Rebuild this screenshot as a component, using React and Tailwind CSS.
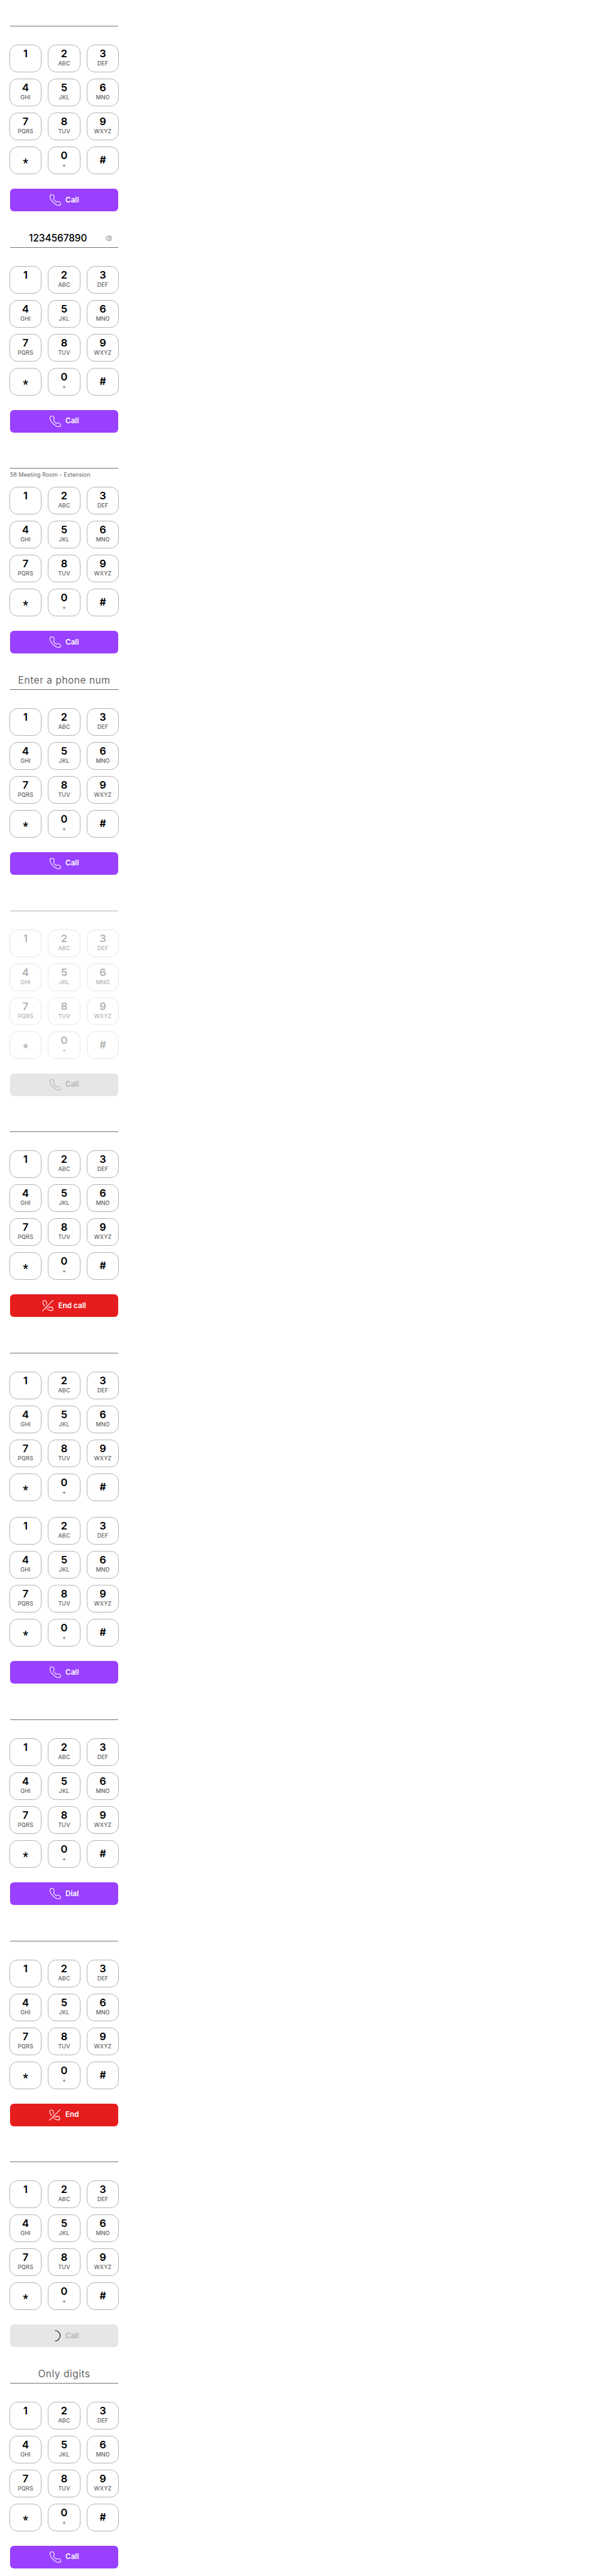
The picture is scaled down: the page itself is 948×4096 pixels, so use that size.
const KEYS = [
  ["1", ""], ["2", "ABC"], ["3", "DEF"],
  ["4", "GHI"], ["5", "JKL"], ["6", "MNO"],
  ["7", "PQRS"], ["8", "TUV"], ["9", "WXYZ"],
  ["*", null], ["0", "+"], ["#", null],
];

function PhoneIcon() {
  return (
    <svg viewBox="0 0 24 24" className="h-[18px] w-[18px]" fill="none" stroke="currentColor" strokeWidth="1.4" strokeLinejoin="round">
      <path d="M4.6.7C2.5.7.7 2.4.7 4.6C.7 8 3.3 13 7.2 16.8C11 20.7 16.2 23.3 19.5 23.3C21.7 23.3 23.3 21.8 23.3 19.7C23.3 17 20.5 15.3 18 15.3C16.2 15.3 15.1 15.7 14.4 16.3C12 15.2 9.3 12.7 8 9.8C9.3 8.9 9.8 7.7 9.7 6.2C9.5 3 7.5.7 4.6.7Z" />
    </svg>
  );
}

function EndCallIcon() {
  return (
    <svg viewBox="0 0 24 24" className="h-[18px] w-[18px]" fill="none" stroke="currentColor" strokeWidth="1.4" strokeLinecap="round">
      <path d="M23.3.7L.7 23.3" />
      <path d="M5.2 13.2C3 10.3 1.4 7.3 1.4 4.7C1.4 2.5 3 1.2 5 1.2C8 1.2 9.7 4 9.7 6.6C9.7 8 9.3 9 8.4 9.8" />
      <path d="M8.5 17.3C11.7 20.3 15.7 22.5 18.8 22.5C21.3 22.5 22.8 21.2 22.8 19.2C22.8 16.5 20.5 14.8 17.5 14.8C16 14.8 14.8 15.5 14.2 16.3C13 15.7 12 14.9 11.2 14" />
    </svg>
  );
}

function Spinner() {
  return (
    <svg viewBox="0 0 24 24" className="h-[18px] w-[18px] text-black" fill="none" stroke="currentColor" strokeWidth="1.4">
      <path d="M11.3 1A11 11 0 0 1 11.3 23" />
    </svg>
  );
}

function Backspace() {
  return (
    <svg viewBox="0 0 12 10" className="mb-[6px] h-[7.5px] w-[9px]" fill="none" stroke="#333" strokeWidth="0.9">
      <path d="M3.8.6H11.5V9.4H3.8L.6 5Z" />
      <path d="M5.7 3.2L9.3 6.8M9.3 3.2L5.7 6.8" />
    </svg>
  );
}

function Field({ value, placeholder, helper, disabled }) {
  return (
    <div className="h-[60px]">
      <div className={`flex h-[30px] items-end border-b-[0.75px] pb-[4px] ${disabled ? "border-[#b3b3b3]" : "border-[#757575]"}`}>
        {value && (
          <>
            <span className="w-[152px] pl-[1px] text-center text-[15.5px] leading-[20px] font-medium tracking-[-0.1px] text-black">{value}</span>
            <Backspace />
          </>
        )}
        {placeholder && (
          <span className="w-full text-center text-[15.5px] leading-[20px] tracking-[0.5px] whitespace-nowrap text-[#666]">{placeholder}</span>
        )}
      </div>
      {helper && <p className="mt-[4px] text-[9px] leading-[12px] tracking-[0.08px] whitespace-nowrap text-[#666]">{helper}</p>}
    </div>
  );
}

function Key({ main, sub, disabled }) {
  const color = disabled ? "text-[#b3b3b3] outline-[#e6e6e6]" : "text-black outline-[#b3b3b3]";
  const symbol = main === "*" ? "pt-[15px] font-['Roboto',sans-serif] text-[18px]" : "pt-[11px] text-[15.5px]";
  return (
    <div className={`flex h-[42px] flex-col items-center rounded-[12px] outline-[0.75px] ${color}`}>
      {sub === null ? (
        <span className={`leading-[20px] font-bold ${symbol}`}>{main}</span>
      ) : (
        <>
          <span className="pt-[3px] text-[16.5px] leading-[20px] font-semibold">{main}</span>
          <span className={`text-[9px] leading-[12px] font-medium tracking-[0.1px] ${disabled ? "" : "text-[#666]"}`}>{sub}</span>
        </>
      )}
    </div>
  );
}

const TONES = {
  call: "bg-[#9941ff] text-white",
  end: "bg-[#e61d1d] text-white",
  off: "bg-[#e6e6e6] text-[#b3b3b3]",
};

function DialPad({ field = true, button = "Call", tone = "call", icon = "phone", disabled, ...input }) {
  return (
    <section className="w-[172.5px]">
      {field && <Field disabled={disabled} {...input} />}
      <div className="grid grid-cols-3 gap-[12px]">
        {KEYS.map(([main, sub]) => (
          <Key key={main} main={main} sub={sub} disabled={disabled} />
        ))}
      </div>
      {button && (
        <div className={`mt-6 flex h-9 items-center justify-center gap-[7.5px] rounded-[6px] ${TONES[tone]}`}>
          {icon === "phone" && <PhoneIcon />}
          {icon === "end" && <EndCallIcon />}
          {icon === "spinner" && <Spinner />}
          <span className="pb-[1px] text-[11.7px] leading-[18px] font-semibold">{button}</span>
        </div>
      )}
    </section>
  );
}

export default function App() {
  return (
    <main className="flex h-[4096px] flex-col gap-[27.64px] overflow-hidden bg-white pt-[12px] pl-[15.75px] font-['Inter',sans-serif]">
      <DialPad />
      <DialPad value="1234567890" />
      <DialPad helper="58 Meeting Room - Extension" />
      <DialPad placeholder="Enter a phone num" />
      <DialPad disabled tone="off" />
      <DialPad button="End call" tone="end" icon="end" />
      <DialPad button={null} />
      <DialPad field={false} />
      <DialPad button="Dial" />
      <DialPad button="End" tone="end" icon="end" />
      <DialPad tone="off" icon="spinner" />
      <DialPad placeholder="Only digits" />
    </main>
  );
}
